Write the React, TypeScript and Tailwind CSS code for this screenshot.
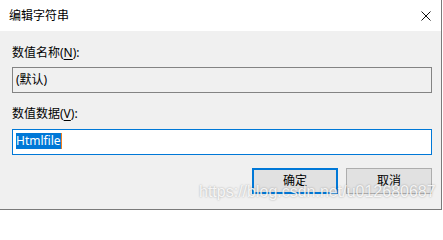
import React from "react";

export default function App() {
  const font = { fontFamily: '"Noto Sans", "Noto Sans CJK SC", sans-serif' };
  return (
    <div className="w-[443px] h-[211px] bg-white relative overflow-hidden text-black" style={font}>
      <div className="w-[442px] h-[210px] border-r border-b border-[#7a7a7a] flex flex-col">
        <div className="h-[31px] bg-white flex items-center justify-between pl-[9px] pr-[10px] shrink-0">
          <span className="text-[12px] leading-[16px]">编辑字符串</span>
          <svg width="10" height="10" viewBox="0 0 10 10" className="block">
            <path d="M0.5 0.5 L9.5 9.5 M9.5 0.5 L0.5 9.5" stroke="#111" strokeWidth="1" fill="none" />
          </svg>
        </div>
        <div className="flex-1 bg-[#f0f0f0] pl-[12px] pr-[9px] pt-[14px] flex flex-col">
          <div className="text-[12px] leading-[16px] h-[16px]">
            数值名称(<span className="underline underline-offset-2">N</span>):
          </div>
          <div className="mt-[6px] h-[26px] border border-[#838383] bg-[#f0f0f0] flex items-center pl-[3px] text-[12px] leading-[16px]">
            (默认)
          </div>
          <div className="mt-[13px] text-[12px] leading-[16px] h-[16px]">
            数值数据(<span className="underline underline-offset-2">V</span>):
          </div>
          <div className="mt-[7px] h-[26px] border border-[#0078d7] bg-white flex items-center pl-[3px] text-[12px]">
            <span className="bg-[#0078d7] text-white leading-[16px] h-[16px] border-r border-[#f08020] -mt-[3px]">Htmlfile</span>
          </div>
          <div className="mt-[13px] flex justify-end gap-[8px]">
            <button className="w-[86px] h-[26px] bg-[#e1e1e1] border-2 border-[#0078d7] text-[12px] leading-[16px] flex items-center justify-center">
              确定
            </button>
            <button className="w-[86px] h-[26px] bg-[#e1e1e1] border border-[#adadad] text-[12px] leading-[16px] flex items-center justify-center">
              取消
            </button>
          </div>
        </div>
      </div>
      <div
        className="absolute left-[199px] top-[183px] text-[16px] leading-[18px] text-white/85 whitespace-nowrap [text-shadow:0_0_2px_rgba(0,0,0,0.35)] pointer-events-none"
        style={{ fontFamily: '"Liberation Sans", Arial, sans-serif' }}
      >
        https://blog.csdn.net/u012680687
      </div>
    </div>
  );
}
